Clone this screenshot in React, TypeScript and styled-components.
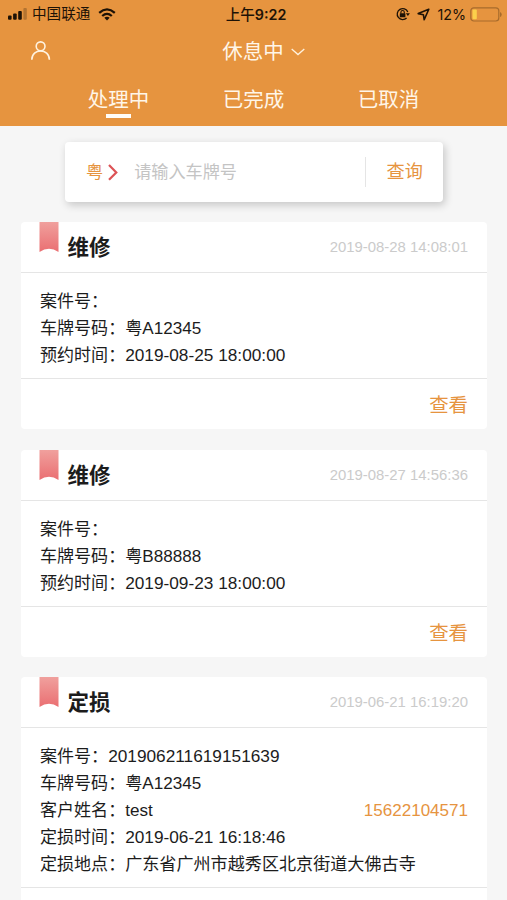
import React from "react";
import styled, { createGlobalStyle } from "styled-components";

const ORANGE = "#e6943f";

const GlobalStyle = createGlobalStyle`
  * { box-sizing: border-box; }
  body {
    margin: 0;
    background: #f6f6f6;
    color: #1c1c1c;
    font-family: "Liberation Sans", "Noto Sans CJK SC", sans-serif;
  }
`;

const Page = styled.div`
  height: 900px;
  overflow: hidden;
  background: #f6f6f6;
`;

const Header = styled.header`
  height: 126px;
  background: ${ORANGE};
  color: #fff6e8;
`;

const StatusBar = styled.div`
  display: grid;
  grid-template-columns: 1fr auto 1fr;
  align-items: center;
  height: 27px;
  padding: 0 5px 0 8px;
  color: #1d1206;
  font-size: 14.6px;
  line-height: 27px;
`;

const StatusGroup = styled.div<{ $end?: boolean }>`
  display: flex;
  align-items: center;
  justify-content: ${(p) => (p.$end ? "flex-end" : "flex-start")};
  white-space: nowrap;
`;

const Carrier = styled.span`
  margin: 1px 8px 0 5px;
`;

const Clock = styled.div`
  padding-left: 2px;
  font-family: "Noto Sans CJK SC", sans-serif;
  font-size: 14.6px;
  font-weight: 500;
  line-height: 25px;
  white-space: nowrap;
`;

const ClockDigits = styled.span`
  font-family: Inter, sans-serif;
  font-size: 14.3px;
  font-weight: 600;
`;

const BatteryText = styled.span`
  margin: 0 4px 0 7px;
  font-family: Inter, sans-serif;
  font-size: 14.3px;
`;

const TitleBar = styled.div`
  display: grid;
  grid-template-columns: 1fr auto 1fr;
  align-items: center;
  height: 48px;
  padding: 0 30px;
`;

const Title = styled.div`
  display: flex;
  align-items: center;
  gap: 7px;
  padding: 2px 0 0 20px;
  font-size: 20.5px;
  line-height: 30px;
`;

const Tabs = styled.nav`
  display: grid;
  grid-template-columns: repeat(3, 135px);
  justify-content: center;
  height: 51px;
  padding-top: 10px;
`;

const Tab = styled.div<{ $active?: boolean }>`
  display: flex;
  flex-direction: column;
  align-items: center;
  font-size: 20.5px;
  line-height: 29px;
  &::after {
    content: "";
    width: 25px;
    height: 4px;
    background: ${(p) => (p.$active ? "#fffdf8" : "transparent")};
  }
`;

const SearchBox = styled.div`
  display: flex;
  align-items: center;
  width: 378px;
  height: 60px;
  margin: 16px 0 20px 65px;
  padding: 0 20px 0 21px;
  border-radius: 4px;
  background: #fff;
  box-shadow: 2px 3px 9px rgba(0, 0, 0, 0.2);
  font-size: 17.15px;
`;

const Region = styled.span`
  margin: 0 5px 3px 0;
  color: ${ORANGE};
`;

const Placeholder = styled.span`
  flex: 1;
  margin: 0 0 3px 16px;
  color: #c4c4c4;
`;

const SearchButton = styled.span`
  height: 30px;
  padding-left: 21px;
  border-left: 1px solid #e5e5e5;
  color: ${ORANGE};
  font-size: 18.2px;
  line-height: 30px;
`;

const List = styled.main`
  display: flex;
  flex-direction: column;
  gap: 20.7px;
  padding: 0 20px 0 21px;
`;

const Card = styled.article`
  border-radius: 4px;
  background: #fff;
`;

const CardHead = styled.div`
  display: flex;
  height: 51px;
  padding: 0 19px 0 18px;
  border-bottom: 1px solid #e5e5e5;
`;

const CardTitle = styled.h2`
  flex: 1;
  margin: 0 0 0 8.5px;
  font-size: 21.5px;
  font-weight: 700;
  line-height: 53px;
`;

const Stamp = styled.time`
  color: #cbcbcb;
  font-size: 14.9px;
  line-height: 51px;
`;

const CardBody = styled.div`
  padding: 15px 19px 9px;
`;

const Row = styled.div`
  display: flex;
  height: 27px;
  font-size: 17.05px;
  line-height: 27px;
  white-space: nowrap;
`;

const Value = styled.span<{ $numeric: boolean }>`
  flex: 1;
  font-size: ${(p) => (p.$numeric ? 17.25 : 17.1)}px;
`;

const Phone = styled.span`
  color: ${ORANGE};
`;

const CardFoot = styled.div`
  height: 51px;
  padding-right: 19px;
  border-top: 1px solid #e5e5e5;
  color: ${ORANGE};
  font-size: 19.4px;
  line-height: 52px;
  text-align: right;
`;

const Signal = () => (
  <svg width="19" height="12" viewBox="0 0 19 12" fill="#1d1206">
    <rect x="0" y="7.5" width="3.6" height="4.2" rx="1" />
    <rect x="5.1" y="5.5" width="3.6" height="6.2" rx="1" />
    <rect x="10.2" y="3" width="3.6" height="8.7" rx="1" />
    <rect x="15.4" y="0" width="3.4" height="11.7" rx="1" opacity="0.25" />
  </svg>
);

const Wifi = () => (
  <svg width="18" height="13" viewBox="0 0 18 13" fill="none" stroke="#1d1206" strokeWidth="2.3">
    <path d="M1.2 4.8Q9-2 16.8 4.8" />
    <path d="M4.2 8Q9 3.8 13.8 8" />
    <path d="M9 12.4 6.3 9.8Q9 7.7 11.7 9.8Z" fill="#1d1206" stroke="none" />
  </svg>
);

const RotationLock = () => (
  <svg width="14" height="14" viewBox="0 0 14 14" fill="none" stroke="#1d1206" strokeWidth="1.3">
    <path d="M11.8 5A5.5 5.5 0 1 0 10.6 11" />
    <path d="M9.8 6.3h4.1l-2 2.8z" fill="#1d1206" stroke="none" />
    <rect x="3.8" y="6.3" width="5.6" height="3.9" rx=".5" fill="#1d1206" stroke="none" />
    <path d="M4.9 6.5V5.2a1.7 1.7 0 0 1 3.4 0v1.3" strokeWidth="1.1" />
  </svg>
);

const LocationIcon = styled.svg`
  margin-left: 7px;
`;

const Location = () => (
  <LocationIcon width="13" height="13" viewBox="0 0 13 13" fill="none" stroke="#1d1206" strokeWidth="1.6" strokeLinejoin="round">
    <path d="M11.8 1.2 1.2 5.6l5.2 1.1.8 5.1z" />
  </LocationIcon>
);

const Battery = () => (
  <svg width="32" height="15" viewBox="0 0 32 15">
    <rect x=".8" y=".8" width="28" height="13.2" rx="3" fill="none" stroke="#a76b2c" strokeWidth="1.2" />
    <rect x="2.5" y="2.5" width="4.3" height="9.8" rx="1" fill="#fbd04b" />
    <path d="M30 5v5q1.7-.5 1.7-2.5T30 5z" fill="#a76b2c" />
  </svg>
);

const Person = () => (
  <svg width="21" height="21" viewBox="0 0 21 21" fill="none" stroke="#fff2df" strokeWidth="1.6">
    <circle cx="10.6" cy="5.3" r="4.4" />
    <path d="M1.8 18.7C1.8 7 19.4 7 19.4 18.7" />
  </svg>
);

const DownChevron = () => (
  <svg width="14" height="8" viewBox="0 0 14 8" fill="none" stroke="#fff2df" strokeWidth="1.3">
    <path d="m.7.9 6.3 5.7L13.3.9" />
  </svg>
);

const RightChevron = () => (
  <svg width="10" height="17" viewBox="0 0 10 17" fill="none" stroke="#dd5356" strokeWidth="2.2">
    <path d="m1 1 7.3 7.4L1 15.8" />
  </svg>
);

const Ribbon = () => (
  <svg width="20" height="30" viewBox="0 0 20 30">
    <defs>
      <linearGradient id="ribbon" x2="0" y2="1">
        <stop stopColor="#f0a09d" />
        <stop offset="1" stopColor="#ea6f72" />
      </linearGradient>
    </defs>
    <path d="M.5 0h19v30Q10 23.5.5 30z" fill="url(#ribbon)" />
  </svg>
);

type Order = {
  kind: string;
  stamp: string;
  action?: string;
  rows: { label: string; value: string; phone?: string }[];
};

const orders: Order[] = [
  {
    kind: "维修",
    stamp: "2019-08-28 14:08:01",
    action: "查看",
    rows: [
      { label: "案件号", value: "" },
      { label: "车牌号码", value: "粤A12345" },
      { label: "预约时间", value: "2019-08-25 18:00:00" },
    ],
  },
  {
    kind: "维修",
    stamp: "2019-08-27 14:56:36",
    action: "查看",
    rows: [
      { label: "案件号", value: "" },
      { label: "车牌号码", value: "粤B88888" },
      { label: "预约时间", value: "2019-09-23 18:00:00" },
    ],
  },
  {
    kind: "定损",
    stamp: "2019-06-21 16:19:20",
    rows: [
      { label: "案件号", value: "201906211619151639" },
      { label: "车牌号码", value: "粤A12345" },
      { label: "客户姓名", value: "test", phone: "15622104571" },
      { label: "定损时间", value: "2019-06-21 16:18:46" },
      { label: "定损地点", value: "广东省广州市越秀区北京街道大佛古寺" },
    ],
  },
];

const OrderCard = ({ order }: { order: Order }) => (
  <Card>
    <CardHead>
      <Ribbon />
      <CardTitle>{order.kind}</CardTitle>
      <Stamp>{order.stamp}</Stamp>
    </CardHead>
    <CardBody>
      {order.rows.map((row) => (
        <Row key={row.label}>
          <span>{row.label}：</span>
          <Value $numeric={/^\d/.test(row.value)}>{row.value}</Value>
          {row.phone && <Phone>{row.phone}</Phone>}
        </Row>
      ))}
    </CardBody>
    <CardFoot>{order.action}</CardFoot>
  </Card>
);

export default function App() {
  return (
    <Page lang="zh-CN">
      <GlobalStyle />
      <Header>
        <StatusBar>
          <StatusGroup>
            <Signal />
            <Carrier>中国联通</Carrier>
            <Wifi />
          </StatusGroup>
          <Clock>
            上午<ClockDigits>9:22</ClockDigits>
          </Clock>
          <StatusGroup $end>
            <RotationLock />
            <Location />
            <BatteryText>12%</BatteryText>
            <Battery />
          </StatusGroup>
        </StatusBar>
        <TitleBar>
          <Person />
          <Title>
            休息中
            <DownChevron />
          </Title>
        </TitleBar>
        <Tabs>
          <Tab $active>处理中</Tab>
          <Tab>已完成</Tab>
          <Tab>已取消</Tab>
        </Tabs>
      </Header>
      <SearchBox>
        <Region>粤</Region>
        <RightChevron />
        <Placeholder>请输入车牌号</Placeholder>
        <SearchButton>查询</SearchButton>
      </SearchBox>
      <List>
        {orders.map((order) => (
          <OrderCard key={order.stamp} order={order} />
        ))}
      </List>
    </Page>
  );
}
